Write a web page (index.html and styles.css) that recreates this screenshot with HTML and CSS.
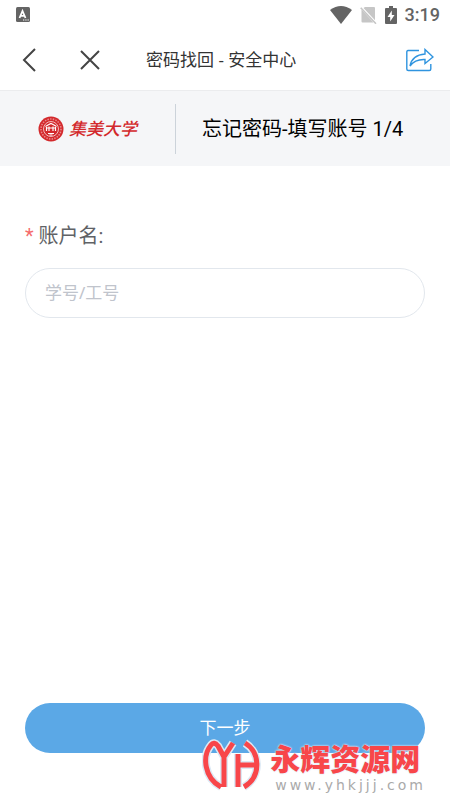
FILE: index.html
```html
<!DOCTYPE html>
<html lang="zh-CN">
<head>
<meta charset="utf-8">
<meta name="viewport" content="width=device-width, initial-scale=1">
<title>密码找回 - 安全中心</title>
<link rel="stylesheet" href="styles.css">
</head>
<body>
<div class="status">
  <svg class="status-app" width="14" height="16" viewBox="0 0 14 16" aria-hidden="true">
    <rect width="14" height="15" rx="1.5" fill="#646464"/>
    <path d="M3.5 11 6.5 4 9.5 11M4.7 8.8h3.7" fill="none" stroke="#fff" stroke-width="1.8"/>
    <path d="M7 13h1.3M9.3 13h1.3M11.5 13h1.3" stroke="#fff"/>
  </svg>
  <div class="status-icons">
    <svg width="22" height="18" viewBox="0 0 22 18" aria-hidden="true"><path d="M0 4Q11-4 22 4L11 18Z" fill="#646464"/></svg>
    <svg width="17" height="18" viewBox="0 0 17 18" aria-hidden="true"><path d="M5 1h9q1 0 1 1v12.200L3.500 1.900ZM1.500 3.500 13.500 16.500H2.500q-1 0-1-1Z" fill="#c6c6c6"/><path d="m.7 1.700 15.300 16" stroke="#c6c6c6" stroke-width="1.600"/></svg>
    <svg width="12" height="18" viewBox="0 0 12 18" aria-hidden="true"><path d="M1 2h3V0h4v2h3q1 0 1 1v14q0 1-1 1H1q-1 0-1-1V3q0-1 1-1Z" fill="#646464"/><path d="M6.800 4.500 2.500 11h2.700v4.500L9.500 9H6.800Z" fill="#fff"/></svg>
    <time class="clock">3:19</time>
  </div>
</div>
<header class="nav">
  <button class="icon-button back" type="button" aria-label="返回"><svg width="14" height="24" viewBox="0 0 14 24"><path d="M13 1 2 12 13 23"/></svg></button>
  <button class="icon-button close" type="button" aria-label="关闭"><svg width="20" height="20" viewBox="0 0 20 20"><path d="m1 1 18 18M19 1 1 19"/></svg></button>
  <h1 class="nav-title">密码找回 - 安全中心</h1>
  <button class="icon-button share" type="button" aria-label="分享"><svg width="28" height="24" viewBox="0 0 28 24"><path d="M13 2.500H2Q.800 2.500.800 4v17q0 1.500 1.500 1.500h21q1.500 0 1.500-1.500v-5"/><path d="M19 1.500 27 9l-8 6.500v-4Q9 11 4 18 6 7 19 6Z"/></svg></button>
</header>
<section class="banner">
  <div class="brand">
    <svg width="26" height="26" viewBox="0 0 26 26" aria-hidden="true">
      <circle cx="13" cy="13" r="12.500" fill="#d3292c"/>
      <circle cx="13" cy="13" r="10" fill="none" stroke="#e9878a" stroke-width="1.600" stroke-dasharray="1.500 1.200"/>
      <circle cx="13" cy="13" r="7.500" fill="#d3292c" stroke="#f4bcbd"/>
      <path d="M7.500 10.500 10 9l3-1.500L16 9l2.500 1.500M8.500 11v4M11 10.500V15M15 10.500V15M17.500 11v4M8 12h10M10 17.500h6M11.500 19h3" fill="none" stroke="#fff" stroke-width="1.200"/>
    </svg>
    <span class="brand-name">集美大学</span>
  </div>
  <h2 class="step-title">忘记密码-填写账号 1/4</h2>
</section>
<form class="form">
  <label class="label" for="account"><span class="required">*</span> 账户名:</label>
  <input class="field" id="account" type="text" placeholder="学号/工号">
  <button class="submit" type="button">下一步</button>
</form>
<div class="watermark">
  <svg class="mark" width="60" height="52" viewBox="0 0 60 52" aria-hidden="true">
    <g class="mark-halo"><path d="M19 48C2 39 0 17 9 6Q12 2 16 7L22 18V48M31 4 22 18M36 15V48M36 26H53M43 4C59 14 59 38 42 48"/></g>
    <g class="mark-line"><path d="M19 48C2 39 0 17 9 6Q12 2 16 7L22 18V48M31 4 22 18M36 15V48M36 26H53M43 4C59 14 59 38 42 48"/></g>
  </svg>
  <div class="watermark-text">
    <span class="watermark-name">永辉资源网</span>
    <span class="watermark-url">www.yhkjjj.com</span>
  </div>
</div>
</body>
</html>
```
FILE: styles.css
```css
* { box-sizing: border-box; }
body {
  position: relative;
  display: flex;
  flex-direction: column;
  min-height: 100vh;
  margin: 0;
  background: #fff;
  color: #333;
  font-family: "Noto Sans", "Noto Sans CJK SC", sans-serif;
}
button, input { font: inherit; }
svg { display: block; flex: none; }
.status {
  display: flex;
  align-items: center;
  justify-content: space-between;
  height: 30px;
  padding: 0 10px 0 16px;
}
.status-icons { display: flex; align-items: center; gap: 8px; }
.clock { color: #646464; font-family: Roboto, sans-serif; font-size: 18px; font-weight: 500; line-height: 30px; }
.nav {
  display: flex;
  align-items: center;
  height: 61px;
  padding: 0 16px 0 20px;
  border-bottom: 1px solid #ebecee;
}
.icon-button {
  display: flex;
  padding: 0;
  border: 0;
  background: none;
}
.icon-button path { fill: none; stroke: #444; stroke-width: 2; }
.back { padding: 0 2px; }
.close { margin-left: 42px; }
.nav-title { flex: 1; margin: 0 0 0 46px; font-size: 17px; font-weight: 400; line-height: 24px; }
.icon-button.share path { stroke: #2f94df; stroke-width: 1.400; }
.banner {
  display: flex;
  align-items: center;
  height: 75px;
  padding: 0 24px 0 38px;
  background: #f5f6f8;
}
.brand {
  display: flex;
  align-items: center;
  gap: 5px;
  height: 50px;
  padding-right: 38px;
  border-right: 1px solid #ccd3da;
}
.brand-name { color: #d3292c; font-size: 17px; font-style: italic; font-weight: 500; line-height: 24px; }
.step-title {
  margin: 0 0 0 26px;
  color: #000;
  font-family: Roboto, "Noto Sans CJK SC", sans-serif;
  font-size: 20px;
  font-weight: 400;
  line-height: 28px;
}
.form {
  display: flex;
  flex: 1;
  flex-direction: column;
  padding: 54px 25px 47px;
}
.label {
  color: #606266;
  font-family: Roboto, "Noto Sans CJK SC", sans-serif;
  font-size: 20px;
  line-height: 32px;
}
.required { color: #f56c6c; }
.field {
  width: 100%;
  height: 50px;
  margin-top: 16px;
  padding: 0 19px 2px;
  border: 1px solid #e2e7ed;
  border-radius: 25px;
  background: #fff;
  color: #333;
  font-size: 17px;
}
.field::placeholder { color: #c0c4cc; opacity: 1; }
.submit {
  height: 50px;
  margin-top: auto;
  padding: 0 0 4px;
  border: 0;
  border-radius: 25px;
  background: #5ba8e6;
  color: #fff;
  font-size: 17px;
}
.watermark {
  position: absolute;
  right: 24px;
  bottom: 7px;
  display: flex;
  align-items: flex-end;
  gap: 8px;
  pointer-events: none;
}
.mark { margin-bottom: 2px; }
.mark-halo path { fill: none; stroke: #dce9f5; stroke-width: 8; }
.mark-line path { fill: none; stroke: #f8464a; stroke-width: 5; }
.watermark-text { display: flex; flex-direction: column; }
.watermark-name {
  color: #f8464a;
  font-size: 30px;
  font-weight: 900;
  line-height: 36px;
  text-shadow: 0 0 2px #dce9f5, 0 0 2px #dce9f5;
}
.watermark-url {
  padding-left: 5px;
  color: #aaa;
  font-family: "DejaVu Sans", sans-serif;
  font-size: 14px;
  letter-spacing: 3px;
  line-height: 16px;
}
```
